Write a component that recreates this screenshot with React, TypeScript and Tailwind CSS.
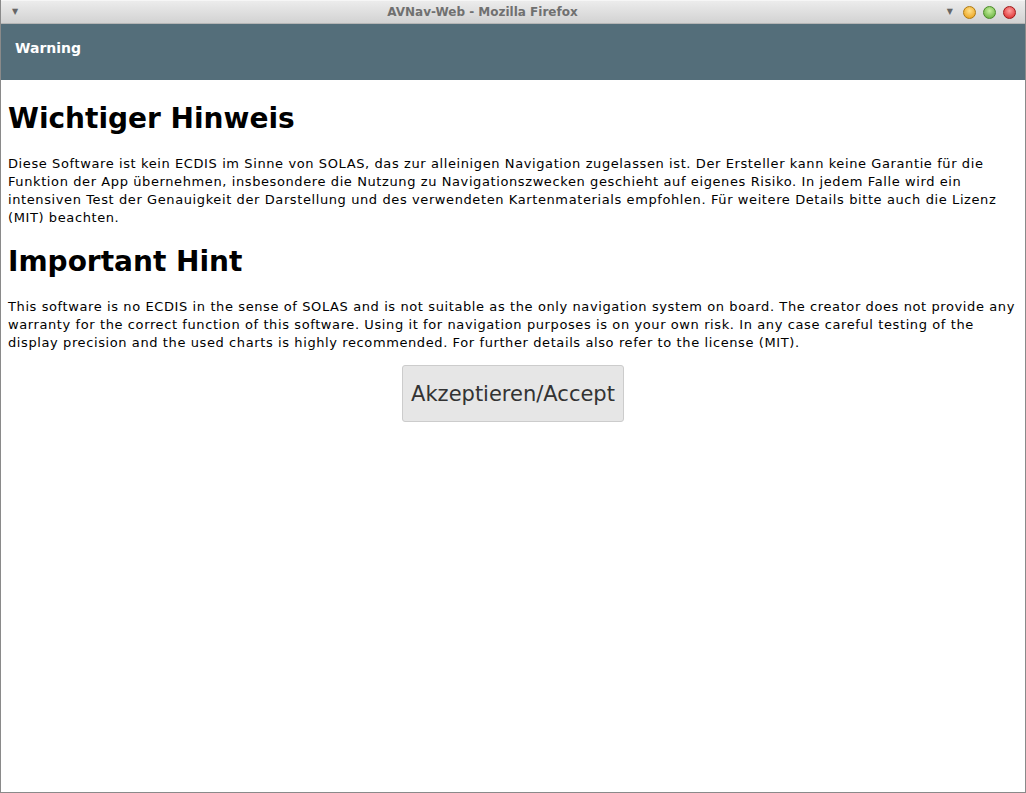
export default function App() {
  return (
    <div className="w-[1026px] h-[793px] flex flex-col bg-white border-x border-b border-[#8a8a8a] overflow-hidden" style={{ fontFamily: '"DejaVu Sans", Verdana, sans-serif' }}>
      {/* Window title bar */}
      <div className="h-6 shrink-0 flex items-center pl-[11px] pr-[9px] bg-gradient-to-b from-[#ececec] to-[#d2d2d2] border-t border-[#f6f6f6] border-b border-b-[#b5b5b5]">
        <span className="text-[8px] text-[#666]">▼</span>
        <div className="flex-1 text-center text-[12px] font-bold text-[#707070]">
          AVNav-Web - Mozilla Firefox
        </div>
        <div className="flex items-center gap-[7px]">
          <span className="text-[8px] text-[#666] mr-[3px]">▼</span>
          <span className="w-[13px] h-[13px] rounded-full bg-[radial-gradient(circle_at_50%_35%,#ffe08a,#e89a10)] border border-[#b07a10]" />
          <span className="w-[13px] h-[13px] rounded-full bg-[radial-gradient(circle_at_50%_35%,#c8f0a0,#5aa830)] border border-[#4a8a28]" />
          <span className="w-[13px] h-[13px] rounded-full bg-[radial-gradient(circle_at_50%_35%,#ffa0a0,#d82020)] border border-[#a01818]" />
        </div>
      </div>

      {/* App header */}
      <div className="h-14 shrink-0 bg-[#546e7a] flex items-start px-[14px] pt-[14px]">
        <span className="text-white font-bold text-[14px]">Warning</span>
      </div>

      {/* Content */}
      <div className="px-[7px] text-black">
        <h1 className="text-[28px] font-bold mt-[22px] mb-[19px] leading-[34px]">Wichtiger Hinweis</h1>
        <p className="text-[13px] leading-[18px] tracking-[0.6px]">
          Diese Software ist kein ECDIS im Sinne von SOLAS, das zur alleinigen Navigation zugelassen ist. Der Ersteller kann keine Garantie für die Funktion der App übernehmen, insbesondere die Nutzung zu Navigationszwecken geschieht auf eigenes Risiko. In jedem Falle wird ein intensiven Test der Genauigkeit der Darstellung und des verwendeten Kartenmaterials empfohlen. Für weitere Details bitte auch die Lizenz (MIT) beachten.
        </p>
        <h1 className="text-[28px] font-bold mt-[18px] mb-[19px] leading-[34px]">Important Hint</h1>
        <p className="text-[13px] leading-[18px] tracking-[0.6px]">
          This software is no ECDIS in the sense of SOLAS and is not suitable as the only navigation system on board. The creator does not provide any warranty for the correct function of this software. Using it for navigation purposes is on your own risk. In any case careful testing of the display precision and the used charts is highly recommended. For further details also refer to the license (MIT).
        </p>
        <div className="flex justify-center mt-[13px]">
          <button className="h-[57px] px-[8px] pt-[2px] bg-[#e6e6e6] border border-[#cccccc] rounded-[3px] text-[21px] text-[#333]">
            Akzeptieren/Accept
          </button>
        </div>
      </div>
    </div>
  );
}
